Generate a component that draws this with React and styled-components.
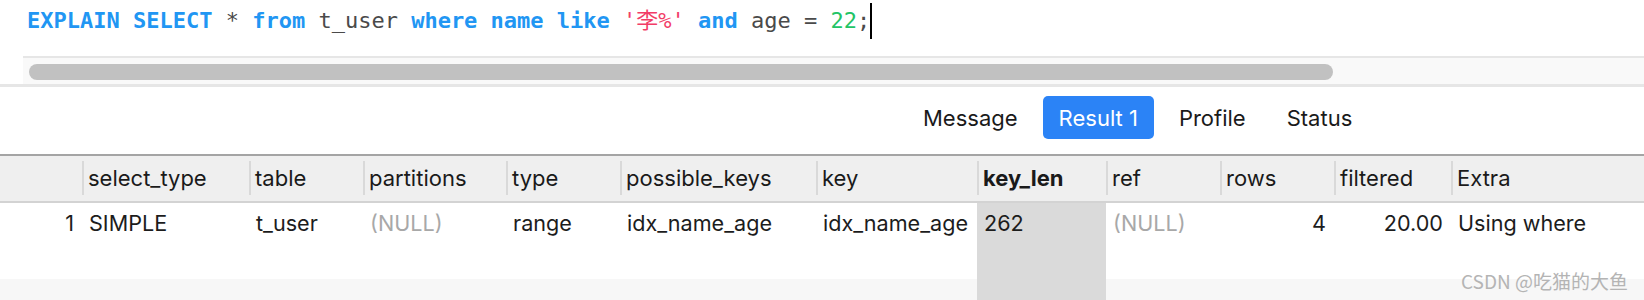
import React from "react";
import styled, { createGlobalStyle } from "styled-components";

const GlobalStyle = createGlobalStyle`
  body {
    margin: 0;
    background: #ffffff;
    font-family: Inter, "Noto Sans", sans-serif;
  }
`

const Page = styled.div`
  position: relative;
  width: 1644px;
  height: 300px;
  overflow: hidden;
  background: #ffffff;
`

// editor
const Editor = styled.div`
  height: 53px;
  padding: 3px 0 0 27px;
  font-family: "DejaVu Sans Mono", "Noto Sans CJK SC", monospace;
  font-size: 22px;
  line-height: 36px;
  color: #4a4a4a;
  white-space: pre;
`

const Token = styled.span`
  color: ${(p) => p.color || "#4a4a4a"};
  font-weight: ${(p) => (p.bold ? 700 : 400)};
`

const Caret = styled.span`
  display: inline-block;
  width: 2px;
  height: 36px;
  vertical-align: top;
  background: #000000;
`

const ScrollTrack = styled.div`
  margin-left: 23px;
  height: 28px;
  border-top: 2px solid #e6e6e6;
  background: #f9f9f9;
  padding: 6px 0 0 6px;
  box-sizing: border-box;
`

const ScrollThumb = styled.div`
  width: 1304px;
  height: 16px;
  border-radius: 8px;
  background: #c1c1c1;
`

const ScrollEdge = styled.div`
  height: 3px;
  background: #e6e6e6;
`

// tabs
const TabBar = styled.div`
  display: flex;
  gap: 9px;
  padding: 9px 0 15px 907px;
`

const Tab = styled.div`
  height: 43px;
  padding: 0 16px;
  display: flex;
  align-items: center;
  border-radius: 5px;
  font-size: 22px;
  color: ${(p) => (p.active ? "#ffffff" : "#1a1a1a")};
  background: ${(p) => (p.active ? "#2b83f6" : "transparent")};
`

// grid
const Table = styled.div`
  border-top: 2px solid #a4a4a4;
`

const Row = styled.div`
  display: grid;
  grid-template-columns: 82px 167px 114px 143px 114px 196px 161px 129px 114px 114px 117px 1fr;
`

const HeadRow = styled(Row)`
  height: 45px;
  background: #efefef;
  border-bottom: 2px solid #d3d3d3;
`

const HeadCell = styled.div`
  padding-top: 5px;
`

const HeadLabel = styled.div`
  height: 34px;
  line-height: 34px;
  padding-left: 4px;
  border-left: ${(p) => (p.first ? "none" : "2px solid #d9d9d9")};
  font-size: 22px;
  font-weight: ${(p) => (p.bold ? 700 : 400)};
  color: #1a1a1a;
  white-space: nowrap;
`

const DataCell = styled.div`
  height: 76px;
  padding: 7px ${(p) => (p.right ? "8px" : "0")} 0 ${(p) => (p.right ? "0" : "7px")};
  box-sizing: border-box;
  font-size: 21.6px;
  line-height: 26px;
  text-align: ${(p) => (p.right ? "right" : "left")};
  color: ${(p) => (p.muted ? "#a8a8a8" : "#1c1c1c")};
  background: ${(p) => (p.selected ? "#dadada" : "#ffffff")};
  white-space: nowrap;
`

const StripeCell = styled.div`
  height: 40px;
  background: ${(p) => (p.selected ? "#dadada" : "#f7f7f7")};
`

const Watermark = styled.div`
  position: absolute;
  right: 16px;
  bottom: 7px;
  font-family: "Noto Sans CJK SC", sans-serif;
  font-size: 19px;
  line-height: 24px;
  color: #b4b4b4;
`

const columns = [
  { name: "", value: "1", right: true },
  { name: "select_type", value: "SIMPLE" },
  { name: "table", value: "t_user" },
  { name: "partitions", value: null },
  { name: "type", value: "range" },
  { name: "possible_keys", value: "idx_name_age" },
  { name: "key", value: "idx_name_age" },
  { name: "key_len", value: "262", selected: true },
  { name: "ref", value: null },
  { name: "rows", value: "4", right: true },
  { name: "filtered", value: "20.00", right: true },
  { name: "Extra", value: "Using where" },
]

const BLUE = "#2196f3"

function App() {
  return (
    <Page>
      <GlobalStyle />
      <Editor>
        <Token color={BLUE} bold>EXPLAIN SELECT</Token>
        <Token> * </Token>
        <Token color={BLUE} bold>from</Token>
        <Token> t_user </Token>
        <Token color={BLUE} bold>where name like</Token>
        <Token> </Token>
        <Token color="#f23d67">'李%'</Token>
        <Token> </Token>
        <Token color={BLUE} bold>and</Token>
        <Token> age = </Token>
        <Token color="#22c466">22</Token>
        <Token>;</Token>
        <Caret />
      </Editor>
      <ScrollTrack>
        <ScrollThumb />
      </ScrollTrack>
      <ScrollEdge />

      <TabBar>
        <Tab>Message</Tab>
        <Tab active>Result 1</Tab>
        <Tab>Profile</Tab>
        <Tab>Status</Tab>
      </TabBar>

      <Table>
        <HeadRow>
          {columns.map((col, i) => (
            <HeadCell key={i}>
              <HeadLabel first={i === 0} bold={col.selected}>{col.name}</HeadLabel>
            </HeadCell>
          ))}
        </HeadRow>
        <Row>
          {columns.map((col, i) => (
            <DataCell key={i} right={col.right} muted={col.value === null} selected={col.selected}>
              {col.value === null ? "(NULL)" : col.value}
            </DataCell>
          ))}
        </Row>
        <Row>
          {columns.map((col, i) => (
            <StripeCell key={i} selected={col.selected} />
          ))}
        </Row>
      </Table>
      <Watermark>CSDN @吃猫的大鱼</Watermark>
    </Page>
  )
}

export default App;
